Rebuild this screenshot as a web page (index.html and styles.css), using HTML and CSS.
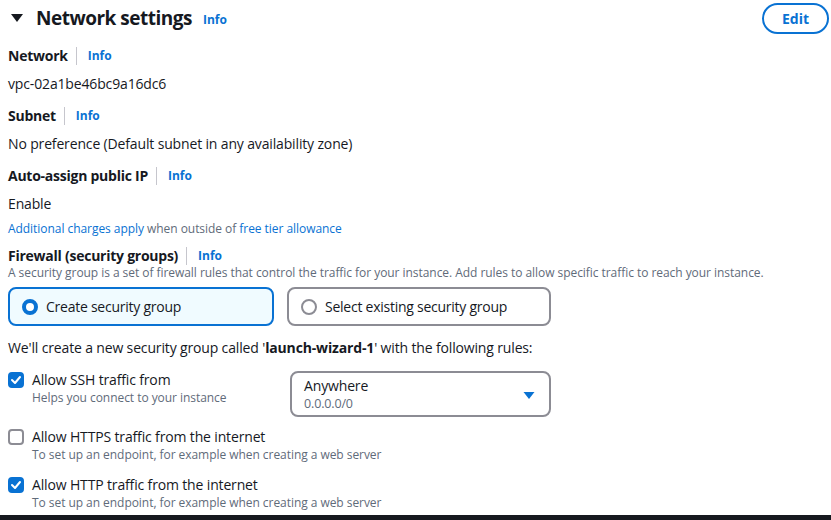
FILE: index.html
```html
<!DOCTYPE html>
<html>
<head>
<meta charset="utf-8">
<link rel="stylesheet" href="styles.css">
</head>
<body>
<div class="page">
  <header class="header">
    <div class="title-wrap">
      <svg class="caret" width="14" height="10" viewBox="0 0 14 10"><path d="M1 1 L13 1 L7 9 Z" fill="#16191f"/></svg>
      <h2 class="title">Network settings</h2>
      <a class="info info-title">Info</a>
    </div>
    <button class="edit">Edit</button>
  </header>

  <div class="field">
    <div class="label"><span class="label-text">Network</span><span class="sep"></span><a class="info">Info</a></div>
    <div class="value">vpc-02a1be46bc9a16dc6</div>
  </div>
  <div class="field">
    <div class="label"><span class="label-text">Subnet</span><span class="sep"></span><a class="info">Info</a></div>
    <div class="value">No preference (Default subnet in any availability zone)</div>
  </div>
  <div class="field">
    <div class="label"><span class="label-text">Auto-assign public IP</span><span class="sep"></span><a class="info">Info</a></div>
    <div class="value">Enable</div>
    <div class="note"><a class="link">Additional charges apply</a> when outside of <a class="link">free tier allowance</a></div>
  </div>

  <div class="firewall">
    <div class="label"><span class="label-text">Firewall (security groups)</span><span class="sep"></span><a class="info">Info</a></div>
    <div class="desc">A security group is a set of firewall rules that control the traffic for your instance. Add rules to allow specific traffic to reach your instance.</div>
    <div class="tiles">
      <div class="tile tile-create selected"><span class="radio on"></span>Create security group</div>
      <div class="tile tile-select"><span class="radio"></span>Select existing security group</div>
    </div>
  </div>

  <p class="intro">We'll create a new security group called '<b>launch-wizard-1</b>' with the following rules:</p>

  <div class="rule rule-ssh">
    <div class="check-row check-ssh">
      <span class="box checked"><svg width="12" height="10" viewBox="0 0 12 10"><path d="M2 5 L5 8 L10 2" fill="none" stroke="#fff" stroke-width="2" stroke-linecap="round" stroke-linejoin="round"/></svg></span>
      <div>
        <div class="rule-label">Allow SSH traffic from</div>
        <div class="rule-desc">Helps you connect to your instance</div>
      </div>
    </div>
    <div class="select">
      <div>
        <div class="sel-main">Anywhere</div>
        <div class="sel-sub">0.0.0.0/0</div>
      </div>
      <svg class="sel-caret" width="12" height="9" viewBox="0 0 12 9"><path d="M0.5 1 L11.5 1 L6 8 Z" fill="#0972d3"/></svg>
    </div>
  </div>

  <div class="rule rule-https">
    <div class="check-row">
      <span class="box"></span>
      <div>
        <div class="rule-label">Allow HTTPS traffic from the internet</div>
        <div class="rule-desc">To set up an endpoint, for example when creating a web server</div>
      </div>
    </div>
  </div>

  <div class="rule rule-http">
    <div class="check-row">
      <span class="box checked"><svg width="12" height="10" viewBox="0 0 12 10"><path d="M2 5 L5 8 L10 2" fill="none" stroke="#fff" stroke-width="2" stroke-linecap="round" stroke-linejoin="round"/></svg></span>
      <div>
        <div class="rule-label">Allow HTTP traffic from the internet</div>
        <div class="rule-desc">To set up an endpoint, for example when creating a web server</div>
      </div>
    </div>
  </div>
</div>
<div class="bottom-bar"></div>
</body>
</html>
```

FILE: styles.css
```css
* { box-sizing: border-box; }
html, body { margin: 0; padding: 0; }
body {
  width: 831px;
  height: 520px;
  overflow: hidden;
  background: #fff;
  font-family: "Open Sans", "Noto Sans", sans-serif;
  color: #16191f;
  font-size: 14px;
  letter-spacing: -0.15px;
  position: relative;
}
.page {
  padding: 0 0 0 8px;
  height: 515px;
  overflow: hidden;
}
.header {
  display: flex;
  justify-content: space-between;
  align-items: center;
  height: 36px;
}
.title-wrap {
  display: flex;
  align-items: center;
}
.caret { margin: 0 12px 0 2px; }
.title {
  margin: 0;
  font-size: 19px;
  font-weight: 700;
  line-height: 34px;
  letter-spacing: -0.5px;
}
.info {
  color: #0972d3;
  font-weight: 700;
  font-size: 12px;
  letter-spacing: 0;
}
.info-title { margin-left: 11px; margin-top: 3px; }
.edit {
  margin-right: 2px;
  width: 67px;
  height: 31px;
  border: 2px solid #0972d3;
  border-radius: 16px;
  background: #fff;
  color: #0972d3;
  font-family: inherit;
  font-weight: 700;
  font-size: 14px;
  padding: 0;
}
.field { margin-top: 8px; }
.field + .field { margin-top: 10px; }
.label {
  display: flex;
  align-items: center;
  height: 24px;
  line-height: 24px;
}
.label-text { font-weight: 700; font-size: 14px; letter-spacing: -0.25px; }
.sep {
  width: 1px;
  height: 18px;
  background: #c6c6cd;
  margin: 0 11px 0 8px;
}
.value {
  margin-top: 6px;
  line-height: 20px;
}
.note {
  margin-top: 7px;
  font-size: 12px;
  line-height: 16px;
  letter-spacing: -0.05px;
  color: #5f6b7a;
}
.link { color: #0972d3; }
.firewall { margin-top: 7px; }
.desc {
  font-size: 12px;
  line-height: 16px;
  letter-spacing: -0.05px;
  color: #5f6b7a;
  margin-top: -3px;
}
.tiles {
  display: flex;
  gap: 13px;
  margin-top: 6px;
}
.tile {
  display: flex;
  align-items: center;
  height: 39px;
  border: 2px solid #8c8c94;
  border-radius: 8px;
  padding-left: 12px;
  font-size: 14px;
  letter-spacing: -0.25px;
}
.tile-create { width: 266px; }
.tile-select { width: 264px; }
.tile.selected {
  border-color: #0972d3;
  background: #f0fbff;
}
.radio {
  width: 16px;
  height: 16px;
  border-radius: 50%;
  border: 2px solid #8c8c94;
  margin-right: 8px;
  flex: none;
}
.radio.on {
  border: 4px solid #0972d3;
  background: #fff;
}
.intro {
  margin: 12px 0 0;
  line-height: 20px;
}
.intro b { font-weight: 700; }
.rule { display: flex; }
.rule-ssh { margin-top: 12px; }
.rule-https { margin-top: 10px; }
.rule-http { margin-top: 12px; }
.check-row {
  display: flex;
  align-items: flex-start;
}
.check-ssh { width: 282px; }
.box {
  width: 16px;
  height: 16px;
  border: 2px solid #8c8c94;
  border-radius: 4px;
  margin-top: 2px;
  margin-right: 8px;
  flex: none;
  display: flex;
  align-items: center;
  justify-content: center;
}
.box.checked {
  background: #0972d3;
  border-color: #0972d3;
}
.rule-label { line-height: 20px; }
.rule-desc {
  font-size: 12px;
  line-height: 16px;
  letter-spacing: -0.05px;
  color: #5f6b7a;
}
.select {
  width: 261px;
  height: 46px;
  margin-top: 1px;
  border: 2px solid #8c8c94;
  border-radius: 8px;
  display: flex;
  align-items: flex-start;
  justify-content: space-between;
  padding: 4px 14px 0 12px;
}
.sel-main { line-height: 18px; }
.sel-sub { font-size: 12.5px; line-height: 18px; color: #5f6b7a; }
.sel-caret { margin-top: 14px; }
.bottom-bar {
  position: absolute;
  left: 0;
  bottom: 0;
  width: 831px;
  height: 5px;
  background: #16191f;
}
```
